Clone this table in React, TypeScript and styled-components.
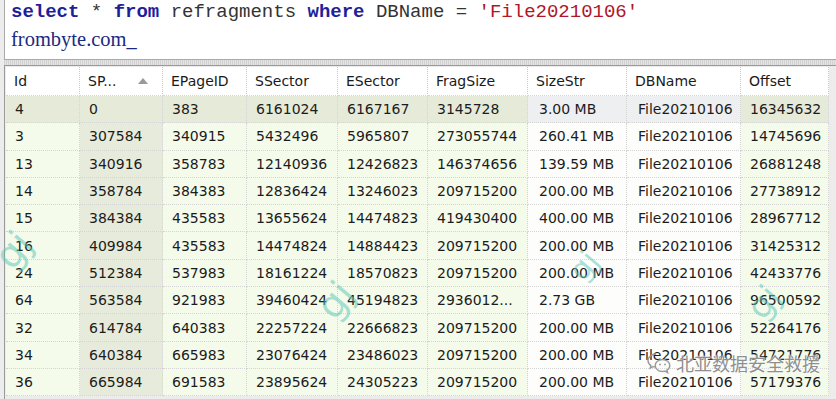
import styled, { createGlobalStyle } from 'styled-components';

const GlobalStyle = createGlobalStyle`
  html, body {
    margin: 0;
    padding: 0;
    background: #ececec;
    overflow: hidden;
  }
`;

const Page = styled.div`
  position: relative;
  width: 836px;
  height: 399px;
  overflow: hidden;
  font-family: "DejaVu Sans", Verdana, sans-serif;
`;

const Editor = styled.div`
  margin-left: 4px;
  height: 60px;
  background: #fff;
  border-left: 1px solid #a9a9a9;
  border-bottom: 1px solid #a9a9a9;
  padding: 1px 0 0 6px;
  box-sizing: border-box;
`;

const SqlLine = styled.div`
  font-family: "Liberation Mono", "Courier New", monospace;
  font-size: 19px;
  line-height: 23px;
  color: #333;
  white-space: pre;
`;

const Kw = styled.span`
  color: #1f1f9c;
  font-weight: bold;
`;

const Str = styled.span`
  color: #b0162a;
`;

const Comment = styled.div`
  font-family: "Liberation Serif", "Times New Roman", serif;
  font-size: 20.5px;
  line-height: 30px;
  color: #1a2a80;
`;

const Splitter = styled.div`
  height: 5px;
  margin-left: 4px;
  background-color: #e4e4e4;
  background-image: repeating-linear-gradient(90deg, #d2d2d2 0 1px, transparent 1px 2px);
`;

const cols = '74px 83px 84px 91px 90px 100px 99px 114px 88px';

const Grid = styled.div`
  margin-left: 4px;
  border-top: 1px solid #9a9a9a;
  border-left: 1px solid #9a9a9a;
  padding: 1px 0 0 1px;
  background: #ececec;
  height: 340px;
`;

const HeaderRow = styled.div`
  display: grid;
  grid-template-columns: ${cols};
  height: 29px;
  background: #fff;
  width: 823px;
`;

const HeadCell = styled.div`
  display: flex;
  align-items: center;
  justify-content: space-between;
  padding: 0 14px 0 8px;
  font-size: 14px;
  color: #1a1a1a;
  border-right: 1px dotted #c8c8c8;
  border-bottom: 1px dotted #d6d6d6;
  white-space: nowrap;
`;

const SortArrow = styled.span`
  width: 0;
  height: 0;
  border-left: 5px solid transparent;
  border-right: 5px solid transparent;
  border-bottom: 6px solid #9a9a9a;
`;

const Row = styled.div`
  display: grid;
  grid-template-columns: ${cols};
  height: 27.3px;
  width: 823px;
`;

type Kind = 'data' | 'sorted' | 'calc';

const bg = (kind: Kind, selected: boolean) => {
  if (selected) return kind === 'calc' ? '#eeeff1' : '#e6ebd9';
  if (kind === 'sorted') return '#e7ebdb';
  if (kind === 'calc') return '#fdfefb';
  return '#f5fbeb';
};

const Cell = styled.div<{ $kind: Kind; $selected: boolean }>`
  display: flex;
  align-items: center;
  padding-left: ${(p) => (p.$kind === 'calc' ? '11px' : '9px')};
  font-size: 14px;
  color: #1c1c1c;
  background: ${(p) => bg(p.$kind, p.$selected)};
  border-right: 1px dotted #d4d4d4;
  border-bottom: 1px dotted #d4d4d4;
  white-space: nowrap;
  overflow: hidden;
`;

const Mark = styled.span<{ $size: number }>`
  position: absolute;
  font-family: "DejaVu Sans", sans-serif;
  font-size: ${(p) => p.$size}px;
  color: rgba(96, 200, 186, 0.55);
  transform: rotate(-50deg);
  pointer-events: none;
`;

const Stamp = styled.div`
  position: absolute;
  left: 646px;
  top: 350px;
  display: flex;
  align-items: center;
  gap: 4px;
  font-family: "Noto Sans CJK SC", sans-serif;
  font-size: 18px;
  color: #8f8f8f;
  text-shadow: 0 0 2px #fff, 0 0 2px #fff;
`;

const headers = ['Id', 'SP...', 'EPageID', 'SSector', 'ESector', 'FragSize', 'SizeStr', 'DBName', 'Offset'];
const kinds: Kind[] = ['data', 'sorted', 'data', 'data', 'data', 'data', 'calc', 'calc', 'data'];

const rows = [
  ['4', '0', '383', '6161024', '6167167', '3145728', '3.00 MB', 'File20210106', '16345632'],
  ['3', '307584', '340915', '5432496', '5965807', '273055744', '260.41 MB', 'File20210106', '14745696'],
  ['13', '340916', '358783', '12140936', '12426823', '146374656', '139.59 MB', 'File20210106', '26881248'],
  ['14', '358784', '384383', '12836424', '13246023', '209715200', '200.00 MB', 'File20210106', '27738912'],
  ['15', '384384', '435583', '13655624', '14474823', '419430400', '400.00 MB', 'File20210106', '28967712'],
  ['16', '409984', '435583', '14474824', '14884423', '209715200', '200.00 MB', 'File20210106', '31425312'],
  ['24', '512384', '537983', '18161224', '18570823', '209715200', '200.00 MB', 'File20210106', '42433776'],
  ['64', '563584', '921983', '39460424', '45194823', '2936012...', '2.73 GB', 'File20210106', '96500592'],
  ['32', '614784', '640383', '22257224', '22666823', '209715200', '200.00 MB', 'File20210106', '52264176'],
  ['34', '640384', '665983', '23076424', '23486023', '209715200', '200.00 MB', 'File20210106', '54721776'],
  ['36', '665984', '691583', '23895624', '24305223', '209715200', '200.00 MB', 'File20210106', '57179376'],
];

function WeChat() {
  return (
    <svg width="26" height="22" viewBox="0 0 26 22" fill="none" stroke="#9a9a9a" strokeWidth="1.4">
      <path d="M10 2C5.6 2 2 5 2 8.6c0 2 1.1 3.8 2.9 5l-.8 2.6 3-1.6c.9.3 1.9.4 2.9.4" />
      <path d="M16.5 7.5c-4 0-7.3 2.7-7.3 6s3.3 6 7.3 6c.9 0 1.7-.1 2.5-.4l2.6 1.4-.7-2.3c1.7-1.1 2.9-2.8 2.9-4.7 0-3.3-3.3-6-7.3-6z" />
      <circle cx="14" cy="12.5" r="0.9" fill="#9a9a9a" stroke="none" />
      <circle cx="19" cy="12.5" r="0.9" fill="#9a9a9a" stroke="none" />
    </svg>
  );
}

function App() {
  return (
    <Page>
      <GlobalStyle />
      <Editor>
        <SqlLine>
          <Kw>select</Kw> * <Kw>from</Kw> refragments <Kw>where</Kw> DBName = <Str>'File20210106'</Str>
        </SqlLine>
        <Comment>frombyte.com_</Comment>
      </Editor>
      <Splitter />
      <Grid>
        <HeaderRow>
          {headers.map((h, i) => (
            <HeadCell key={h}>
              {h}
              {i === 1 && <SortArrow />}
            </HeadCell>
          ))}
        </HeaderRow>
        {rows.map((r, ri) => (
          <Row key={r[0]}>
            {r.map((v, ci) => (
              <Cell key={ci} $kind={kinds[ci]} $selected={ri === 0}>
                {v}
              </Cell>
            ))}
          </Row>
        ))}
      </Grid>
      <Mark $size={38} style={{ left: -4, top: 228 }}>gj</Mark>
      <Mark $size={38} style={{ left: 318, top: 278 }}>gj</Mark>
      <Mark $size={30} style={{ left: 570, top: 248 }}>gj</Mark>
      <Mark $size={34} style={{ left: 748, top: 282 }}>gj</Mark>
      <Stamp>
        <WeChat />
        北亚数据安全救援
      </Stamp>
    </Page>
  );
}

export default App;
